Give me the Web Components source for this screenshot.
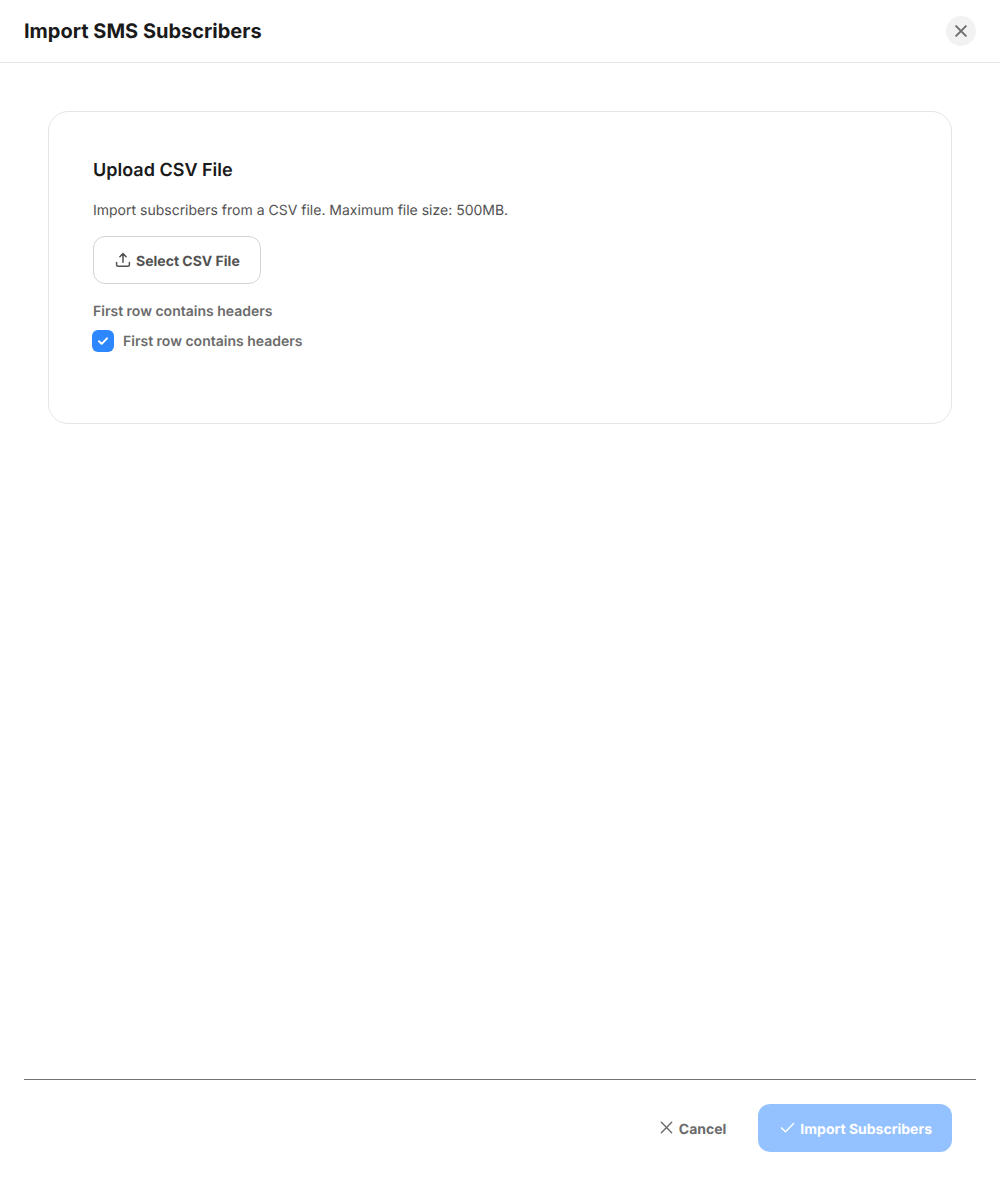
<!DOCTYPE html>
<html>
<head>
<meta charset="utf-8">
<title>Import SMS Subscribers</title>
<style>
  html, body { margin: 0; height: 100%; background: #fff; }
  body { font-family: Inter, sans-serif; }
</style>
</head>
<body>
<import-dialog heading="Import SMS Subscribers">
  <upload-card heading="Upload CSV File" description="Import subscribers from a CSV file. Maximum file size: 500MB.">
    <select-button>Select CSV File</select-button>
    <check-field label="First row contains headers">First row contains headers</check-field>
  </upload-card>
  <footer-button slot="footer" icon="x">Cancel</footer-button>
  <footer-button slot="footer" icon="check" primary>Import Subscribers</footer-button>
</import-dialog>

<script>
class ImportDialog extends HTMLElement {
  connectedCallback() {
    if (this.shadowRoot) return;
    this.attachShadow({ mode: 'open' });
    this.shadowRoot.innerHTML = `
      <style>
        :host { display: flex; flex-direction: column; height: 1200px; font-family: Inter, sans-serif; text-rendering: geometricPrecision; }
        header {
          display: flex; align-items: center; justify-content: space-between;
          height: 62px; padding: 0 24px; border-bottom: 1px solid #e5e5e5;
        }
        h1 { margin: 0; font-size: 20px; line-height: 30px; font-weight: 700; color: #1a1a1a; }
        .close {
          width: 30px; height: 30px; padding: 0; border: 0; border-radius: 50%;
          background: #f2f2f2; display: flex; align-items: center; justify-content: center;
        }
        main { flex: 1; padding: 48px 48px 0; }
        footer {
          margin: 0 24px; height: 121px; box-sizing: border-box; border-top: 1px solid #737373;
          display: flex; justify-content: flex-end; align-items: flex-start; gap: 8px;
          padding: 24px 24px 0 0;
        }
      </style>
      <header>
        <h1>${this.getAttribute('heading')}</h1>
        <button class="close" aria-label="Close">
          <svg width="18" height="18" viewBox="0 0 24 24" fill="none" stroke="#6e6e6e" stroke-width="2.6" stroke-linecap="round"><path d="M5.5 5.5l13 13M18.5 5.5l-13 13"/></svg>
        </button>
      </header>
      <main><slot></slot></main>
      <footer><slot name="footer"></slot></footer>
    `;
  }
}

class UploadCard extends HTMLElement {
  connectedCallback() {
    if (this.shadowRoot) return;
    this.attachShadow({ mode: 'open' });
    this.shadowRoot.innerHTML = `
      <style>
        :host {
          display: block; box-sizing: border-box; height: 313px; padding: 44px;
          border: 1px solid #e5e5e5; border-radius: 20px;
        }
        h2 { margin: 0; font-size: 18px; line-height: 29px; font-weight: 600; color: #1a1a1a; }
        p { margin: 16px 0 15px; font-size: 14px; line-height: 20px; color: #525252; }
      </style>
      <h2>${this.getAttribute('heading')}</h2>
      <p>${this.getAttribute('description')}</p>
      <slot></slot>
    `;
  }
}

class SelectButton extends HTMLElement {
  connectedCallback() {
    if (this.shadowRoot) return;
    this.attachShadow({ mode: 'open' });
    this.shadowRoot.innerHTML = `
      <style>
        :host {
          display: inline-flex; align-items: center; gap: 5px; box-sizing: border-box;
          height: 48px; padding: 0 20px 0 21px; border: 1px solid #d4d4d4; border-radius: 12px;
          font-size: 14px; font-weight: 700; color: #525252; vertical-align: top;
        }
        svg { flex: none; }
        .label { line-height: 20px; padding-top: 3px; }
      </style>
      <svg width="16" height="16" viewBox="0 0 16 16" fill="none" stroke="#525252" stroke-width="1.5" stroke-linecap="round" stroke-linejoin="round"><path d="M8 10.2V1.8M4.9 4.7L8 1.6l3.1 3.1M1.6 10.6v2.2c0 .9.6 1.5 1.5 1.5h9.8c.9 0 1.5-.6 1.5-1.5v-2.2"/></svg>
      <span class="label"><slot></slot></span>
    `;
  }
}

class CheckField extends HTMLElement {
  connectedCallback() {
    if (this.shadowRoot) return;
    this.attachShadow({ mode: 'open' });
    this.shadowRoot.innerHTML = `
      <style>
        :host { display: block; margin-top: 17px; font-size: 14px; font-weight: 600; line-height: 20px; color: #6b6b6b; }
        .heading { padding-top: 1px; }
        .row { display: flex; align-items: center; gap: 9px; margin: 8px 0 0 -1px; height: 22px; }
        .box {
          width: 22px; height: 22px; border-radius: 6px; background: #2d87ff;
          display: flex; align-items: center; justify-content: center;
        }
        .text { padding-top: 2px; }
      </style>
      <div class="heading">${this.getAttribute('label')}</div>
      <div class="row">
        <span class="box"><svg width="12" height="12" viewBox="0 0 12 12" fill="none" stroke="#fff" stroke-width="2" stroke-linecap="round" stroke-linejoin="round"><path d="M2 6.3l2.7 2.6L10 3.4"/></svg></span>
        <span class="text"><slot></slot></span>
      </div>
    `;
  }
}

class FooterButton extends HTMLElement {
  connectedCallback() {
    if (this.shadowRoot) return;
    this.attachShadow({ mode: 'open' });
    const glyph = this.getAttribute('icon') === 'check' ? 'M1.5 8.4l4.4 4.2L14.5 3.8' : 'M2.5 2.5l11 11M13.5 2.5l-11 11';
    this.shadowRoot.innerHTML = `
      <style>
        :host {
          display: inline-flex; align-items: center; gap: 5px; box-sizing: border-box;
          height: 48px; padding: 0 24px 0 20px; border-radius: 12px;
          font-size: 14px; font-weight: 700; color: #6b6b6b;
        }
        :host([primary]) { background: #94c1ff; color: #fff; padding: 0 20px 0 22px; }
        svg { flex: none; margin-top: -1px; }
        .label { line-height: 20px; padding-top: 3px; }
      </style>
      <svg width="15" height="15" viewBox="0 0 16 16" fill="none" stroke="currentColor" stroke-width="1.5" stroke-linecap="round" stroke-linejoin="round"><path d="${glyph}"/></svg>
      <span class="label"><slot></slot></span>
    `;
  }
}

customElements.define('import-dialog', ImportDialog);
customElements.define('upload-card', UploadCard);
customElements.define('select-button', SelectButton);
customElements.define('check-field', CheckField);
customElements.define('footer-button', FooterButton);
</script>
</body>
</html>
